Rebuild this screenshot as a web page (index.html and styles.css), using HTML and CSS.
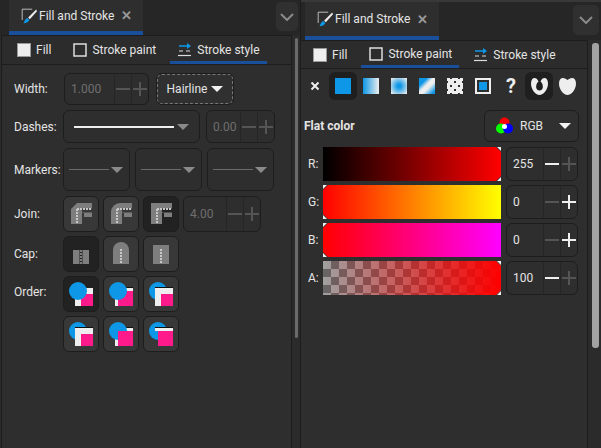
FILE: index.html
```html
<!DOCTYPE html>
<html lang="en">

<head>
    <meta charset="UTF-8">
    <title>Fill and Stroke</title>
    <link rel="stylesheet" href="styles.css">
</head>

<body>
    <svg class="defs" width="0" height="0">
        <symbol id="brush" viewBox="0 0 20 20">
            <path d="M14 1.500H1.500V15" fill="none" stroke="#ddd" stroke-width="1"/>
            <path d="M19 2L9 12l2 2L20 4z" fill="#eee"/>
            <path d="M8 12.500l2.500 2.500c-1 2.500-3.500 4-7.500 4 1.500-1.500 1.500-5 5-6.500z" fill="#0d97e6"/>
        </symbol>
        <symbol id="fill-swatch" viewBox="0 0 14 14">
            <rect x=".5" y=".5" width="13" height="13" fill="#eee" stroke="#999"/>
        </symbol>
        <symbol id="stroke-swatch" viewBox="0 0 14 14">
            <rect x="1" y="1" width="12" height="12" fill="none" stroke="#ddd" stroke-width="1.500"/>
        </symbol>
        <symbol id="style-swatch" viewBox="0 0 14 14">
            <path d="M1 3h9" stroke="#0d97e6" stroke-width="1.500"/>
            <path d="M9 0l4 3-4 3z" fill="#0d97e6"/>
            <path d="M1 8h4M8 8h4" stroke="#ddd" stroke-width="1.200"/>
            <path d="M0 12.500h13" stroke="#ddd" stroke-width="1.200"/>
        </symbol>
    </svg>

    <div class="window">
        <!-- Stroke style panel -->
        <section class="dock dock-left">
            <div class="tabbar">
                <div class="doc-tab">
                    <svg class="ic-brush"><use href="#brush"/></svg>
                    <span>Fill and Stroke</span>
                    <span class="close">✕</span>
                </div>
                <div class="chevron">
                    <svg width="14" height="8" viewBox="0 0 14 8"><path d="M1 1l6 6 6-6" fill="none" stroke="#8a8a8a" stroke-width="2"/></svg>
                </div>
            </div>
            <div class="dock-body">
                <div class="panel">
                    <div class="subtabs">
                        <div class="subtab"><svg class="ic-tab"><use href="#fill-swatch"/></svg>Fill</div>
                        <div class="subtab"><svg class="ic-tab"><use href="#stroke-swatch"/></svg>Stroke paint</div>
                        <div class="subtab active"><svg class="ic-tab"><use href="#style-swatch"/></svg>Stroke style</div>
                    </div>
                    <div class="form">
                        <div class="row row-width">
                            <label>Width:</label>
                            <div class="spin spin-wide dim"><span class="val">1.000</span><span class="btn minus"></span><span class="btn plus"></span></div>
                            <div class="hairline">Hairline<i class="tri tri-light"></i></div>
                        </div>
                        <div class="row row-dashes">
                            <label>Dashes:</label>
                            <div class="combo combo-dash"><i class="dash-line"></i><i class="tri"></i></div>
                            <div class="spin spin-dash dim"><span class="val">0.00</span><span class="btn minus"></span><span class="btn plus"></span></div>
                        </div>
                        <div class="row row-markers">
                            <label>Markers:</label>
                            <div class="combo combo-marker"><i class="marker-line"></i><i class="tri"></i></div>
                            <div class="combo combo-marker"><i class="marker-line"></i><i class="tri"></i></div>
                            <div class="combo combo-marker"><i class="marker-line"></i><i class="tri"></i></div>
                        </div>
                        <div class="row row-tool">
                            <label>Join:</label>
                            <div class="tool">
                                <svg width="36" height="36" viewBox="0 0 36 36">
                                    <path d="M14 7h15v14H21v7H8V13z" class="shape"/>
                                    <path d="M19 17h2v11h-2zM19 12.500h10v4H19z" class="gap"/>
                                    <path d="M14 13h15M14 13v15" class="dots"/>
                                </svg>
                            </div>
                            <div class="tool">
                                <svg width="36" height="36" viewBox="0 0 36 36">
                                    <path d="M17 7h12v14H21v7H8V16a9 9 0 0 1 9-9z" class="shape"/>
                                    <path d="M19 17h2v11h-2zM19 12.500h10v4H19z" class="gap"/>
                                    <path d="M14 13h15M14 13v15" class="dots"/>
                                </svg>
                            </div>
                            <div class="tool on">
                                <svg width="36" height="36" viewBox="0 0 36 36">
                                    <path d="M8 7h21v14H21v7H8z" class="shape"/>
                                    <path d="M19 17h2v11h-2zM19 12.500h10v4H19z" class="gap"/>
                                    <path d="M14 13h15M14 13v15" class="dots"/>
                                </svg>
                            </div>
                            <div class="spin spin-miter dim"><span class="val">4.00</span><span class="btn minus"></span><span class="btn plus"></span></div>
                        </div>
                        <div class="row row-tool">
                            <label>Cap:</label>
                            <div class="tool on">
                                <svg width="36" height="36" viewBox="0 0 36 36">
                                    <path d="M10 14h16v14H10z" class="shape"/>
                                    <path d="M16.500 14h3v14h-3z" class="gap"/>
                                    <path d="M18 14v14" class="dots dots-dim"/>
                                </svg>
                            </div>
                            <div class="tool">
                                <svg width="36" height="36" viewBox="0 0 36 36">
                                    <path d="M10 28V14a8 8 0 0 1 16 0v14z" class="shape"/>
                                    <path d="M18 13v15" class="dots"/>
                                </svg>
                            </div>
                            <div class="tool">
                                <svg width="36" height="36" viewBox="0 0 36 36">
                                    <path d="M10 9h16v19H10z" class="shape"/>
                                    <path d="M18 13v15" class="dots"/>
                                </svg>
                            </div>
                        </div>
                        <div class="row row-tool row-order">
                            <label>Order:</label>
                            <div class="order-grid">
                                <div class="tool on">
                                    <svg width="36" height="36" viewBox="0 0 36 36">
                                        <rect x="12" y="12" width="18" height="18" fill="#eee"/>
                                        <rect x="18" y="18" width="12" height="12" fill="#ff1a8c"/>
                                        <circle cx="15" cy="15" r="9" fill="#0d97e6"/>
                                    </svg>
                                </div>
                                <div class="tool">
                                    <svg width="36" height="36" viewBox="0 0 36 36">
                                        <rect x="12" y="12" width="18" height="18" fill="#eee"/>
                                        <path d="M12 11.500h18" stroke="#111"/>
                                        <rect x="15" y="15" width="15" height="15" fill="#ff1a8c"/>
                                        <circle cx="15" cy="15" r="9" fill="#0d97e6"/>
                                    </svg>
                                </div>
                                <div class="tool">
                                    <svg width="36" height="36" viewBox="0 0 36 36">
                                        <circle cx="15" cy="15" r="9" fill="#0d97e6"/>
                                        <path d="M12 11.500h18" stroke="#111"/>
                                        <rect x="12" y="12" width="18" height="18" fill="#eee"/>
                                        <rect x="18" y="18" width="12" height="12" fill="#ff1a8c"/>
                                    </svg>
                                </div>
                                <div class="tool">
                                    <svg width="36" height="36" viewBox="0 0 36 36">
                                        <circle cx="15" cy="15" r="9" fill="#0d97e6"/>
                                        <path d="M12 11.500h18" stroke="#111"/>
                                        <rect x="12" y="12" width="18" height="18" fill="#eee"/>
                                        <rect x="18" y="18" width="12" height="12" fill="#ff1a8c"/>
                                    </svg>
                                </div>
                                <div class="tool">
                                    <svg width="36" height="36" viewBox="0 0 36 36">
                                        <rect x="12" y="12" width="18" height="18" fill="#eee"/>
                                        <path d="M12 11.500h18" stroke="#111"/>
                                        <circle cx="15" cy="15" r="9" fill="#0d97e6"/>
                                        <rect x="15" y="15" width="15" height="15" fill="#ff1a8c"/>
                                    </svg>
                                </div>
                                <div class="tool">
                                    <svg width="36" height="36" viewBox="0 0 36 36">
                                        <circle cx="15" cy="15" r="9" fill="#0d97e6"/>
                                        <path d="M12 11.500h18" stroke="#111"/>
                                        <rect x="12" y="12" width="18" height="3" fill="#eee"/>
                                        <rect x="15" y="15" width="15" height="15" fill="#ff1a8c"/>
                                    </svg>
                                </div>
                            </div>
                        </div>
                    </div>
                </div>
                <div class="scroll scroll-left"><i></i></div>
            </div>
        </section>

        <!-- Stroke paint panel -->
        <section class="dock dock-right">
            <div class="tabbar">
                <div class="doc-tab">
                    <svg class="ic-brush"><use href="#brush"/></svg>
                    <span>Fill and Stroke</span>
                    <span class="close">✕</span>
                </div>
                <div class="chevron">
                    <svg width="14" height="8" viewBox="0 0 14 8"><path d="M1 1l6 6 6-6" fill="none" stroke="#8a8a8a" stroke-width="2"/></svg>
                </div>
            </div>
            <div class="dock-body">
                <div class="panel">
                    <div class="subtabs">
                        <div class="subtab"><svg class="ic-tab"><use href="#fill-swatch"/></svg>Fill</div>
                        <div class="subtab active"><svg class="ic-tab"><use href="#stroke-swatch"/></svg>Stroke paint</div>
                        <div class="subtab"><svg class="ic-tab"><use href="#style-swatch"/></svg>Stroke style</div>
                    </div>
                    <div class="paint-modes">
                        <div class="mode"><svg width="10" height="10" viewBox="0 0 10 10"><path d="M1.500 1.500l7 7M8.500 1.500l-7 7" stroke="#eee" stroke-width="2"/></svg></div>
                        <div class="mode on"><span class="swatch sw-flat"></span></div>
                        <div class="mode"><span class="swatch sw-linear"></span></div>
                        <div class="mode"><span class="swatch sw-radial"></span></div>
                        <div class="mode"><span class="swatch sw-mesh"></span></div>
                        <div class="mode"><span class="swatch sw-pattern"></span></div>
                        <div class="mode"><span class="swatch sw-swatch"></span></div>
                        <div class="mode mode-unset">?</div>
                        <div class="mode on">
                            <svg width="17" height="17" viewBox="0 0 17 17"><path d="M3.500 0C5 0 6.500 1 7.500 3.500c-2 1.500-2.500 4-2.300 6 .3 2 1.500 3 3.300 3s3-1 3.300-3c.2-2-.3-4.500-2.300-6C10.500 1 12 0 13.500 0 15.500 0 17 2 17 5.500 17 11.500 12.500 17 8.500 17S0 11.500 0 5.500C0 2 1.500 0 3.500 0z" fill="#eee"/></svg>
                        </div>
                        <div class="mode">
                            <svg width="17" height="17" viewBox="0 0 17 17"><path d="M4 0c2 0 3 1 4.500 2C10 1 11 0 13 0c2.500 0 4 2 4 5.500C17 11.500 12.500 17 8.500 17S0 11.500 0 5.500C0 2 1.500 0 4 0z" fill="#eee"/></svg>
                        </div>
                    </div>
                    <div class="flat-row">
                        <strong>Flat color</strong>
                        <div class="rgb-select">
                            <svg width="17" height="17" viewBox="0 0 17 17">
                                <circle cx="8.500" cy="5.500" r="5" fill="#f00"/>
                                <circle cx="5" cy="11.500" r="5" fill="#0f0"/>
                                <circle cx="12" cy="11.500" r="5" fill="#00f"/>
                                <circle cx="8.500" cy="9.500" r="2.500" fill="#fff"/>
                            </svg>
                            <span>RGB</span>
                            <i class="tri tri-light"></i>
                        </div>
                    </div>
                    <div class="sliders">
                        <div class="slide-row">
                            <label>R:</label>
                            <div class="slider">
                                <div class="track track-r"></div>
                                <i class="thumb top-right"></i><i class="thumb bottom-right"></i>
                            </div>
                            <div class="spin spin-color"><span class="val">255</span><span class="btn minus"></span><span class="btn plus faint"></span></div>
                        </div>
                        <div class="slide-row">
                            <label>G:</label>
                            <div class="slider">
                                <div class="track track-g"></div>
                                <i class="thumb top-left"></i><i class="thumb bottom-left"></i>
                            </div>
                            <div class="spin spin-color"><span class="val">0</span><span class="btn minus faint"></span><span class="btn plus"></span></div>
                        </div>
                        <div class="slide-row">
                            <label>B:</label>
                            <div class="slider">
                                <div class="track track-b"></div>
                                <i class="thumb top-left"></i><i class="thumb bottom-left"></i>
                            </div>
                            <div class="spin spin-color"><span class="val">0</span><span class="btn minus faint"></span><span class="btn plus"></span></div>
                        </div>
                        <div class="slide-row">
                            <label>A:</label>
                            <div class="slider">
                                <div class="track track-a"></div>
                                <i class="thumb top-right"></i><i class="thumb bottom-right"></i>
                            </div>
                            <div class="spin spin-color"><span class="val">100</span><span class="btn minus"></span><span class="btn plus faint"></span></div>
                        </div>
                    </div>
                </div>
                <div class="scroll scroll-right"><i></i></div>
            </div>
        </section>
    </div>
</body>

</html>
```

FILE: styles.css
```css
html, body {
    margin: 0;
    padding: 0;
    height: 100%;
    overflow: hidden;
}

body {
    font-family: Roboto, "Noto Sans", sans-serif;
    font-size: 12px;
    color: #e4e4e4;
    background-color: #2b2b2b;
}

.defs {
    display: block;
    height: 0;
}

.window {
    display: flex;
    width: 601px;
    height: 448px;
}

.dock {
    display: flex;
    flex-direction: column;
}

.dock-left {
    width: 300px;
}

.dock-right {
    width: 301px;
    border-left: 1px solid #1d1d1d;
    box-sizing: border-box;
}

/* Tab leiste */
.tabbar {
    display: flex;
    background-color: #262626;
    flex: none;
}

.dock-left .tabbar {
    height: 35px;
    padding-left: 9px;
}

.dock-right .tabbar {
    height: 40px;
    padding-left: 4px;
    border-top: 2px solid #383838;
    box-sizing: border-box;
}

.doc-tab {
    width: 134px;
    box-sizing: border-box;
    display: flex;
    align-items: center;
    padding-left: 12px;
    background-color: #2e2e2e;
    border-bottom: 4px solid #1a4f9c;
    font-size: 12px;
    white-space: nowrap;
}

.ic-brush {
    width: 16px;
    height: 16px;
    margin-right: 2px;
    flex: none;
}

.close {
    margin-left: 7px;
    color: #999;
    font-size: 13px;
    font-weight: bold;
}

.chevron {
    margin-left: auto;
    background-color: #303030;
    border-radius: 5px;
    display: flex;
    align-items: center;
    justify-content: center;
}

.dock-left .chevron {
    width: 22px;
    height: 29px;
    margin-top: 2px;
    margin-right: 2px;
}

.dock-right .chevron {
    width: 26px;
    height: 30px;
    margin-top: 3px;
    margin-right: 2px;
}

.dock-body {
    flex: 1;
    display: flex;
}

.panel {
    flex: 1;
    min-width: 0;
    border-left: 1px solid #1d1d1d;
    border-right: 1px solid #1d1d1d;
    border-top: 1px solid #1d1d1d;
    background-color: #2e2e2e;
}

.dock-left .panel {
    margin-left: 1px;
}

.dock-right .panel {
    border-left: none;
}

.scroll {
    flex: none;
}

.scroll i {
    display: block;
}

.scroll-left {
    width: 8px;
    padding: 3px 2px 0 3px;
    box-sizing: border-box;
}

.scroll-left i {
    height: 300px;
    background-color: #6a6a6a;
    border-radius: 2px;
}

.scroll-right {
    width: 13px;
    padding: 3px 2px 0 4px;
    box-sizing: border-box;
}

.scroll-right i {
    height: 305px;
    background-color: #a2a2a2;
    border-radius: 3px;
}

/* Fill, Stroke paint, Stroke style */
.subtabs {
    display: flex;
    gap: 7px;
    height: 29px;
    box-sizing: border-box;
    padding-left: 7px;
    border-bottom: 1px solid #1d1d1d;
    background-color: #2c2c2c;
}

.dock-right .subtabs {
    padding-left: 4px;
    height: 28px;
}

.subtab {
    display: flex;
    align-items: center;
    gap: 5px;
    height: 27px;
    padding: 0 7px 0 8px;
    box-sizing: border-box;
    white-space: nowrap;
}

.subtab.active {
    border-bottom: 3px solid #1a4f9c;
    padding-top: 2px;
    height: 28px;
}

.dock-right .subtab.active {
    height: 27px;
}

.ic-tab {
    width: 14px;
    height: 14px;
    flex: none;
}

/* Formular */
.form {
    padding: 8px 0 0 12px;
}

.row {
    display: flex;
    align-items: center;
    margin-bottom: 5px;
}

.row label {
    width: 50px;
    flex: none;
}

.row-width {
    height: 32px;
}

.row-dashes {
    height: 33px;
}

.row-dashes label {
    width: 49px;
}

.row-markers {
    height: 43px;
    gap: 5px;
}

.row-markers label {
    width: 44px;
}

.row-tool {
    gap: 4px;
    height: 36px;
    margin-bottom: 4px;
}

.row-tool label {
    width: 45px;
}

.row-order {
    height: 76px;
    align-items: flex-start;
}

.row-order label {
    padding-top: 9px;
}

.order-grid {
    display: grid;
    grid-template-columns: repeat(3, 36px);
    grid-auto-rows: 36px;
    gap: 4px;
}

.spin {
    display: flex;
    align-items: stretch;
    border: 1px solid #1d1d1d;
    border-radius: 6px;
    box-sizing: border-box;
}

.spin .val {
    flex: 1;
    display: flex;
    align-items: center;
    padding-left: 6px;
}

.spin.dim {
    color: #6e6e6e;
}

.spin .btn {
    position: relative;
    width: 17px;
    border-left: 1px solid #262626;
    box-sizing: border-box;
    flex: none;
}

.spin .btn::before {
    content: "";
    position: absolute;
    left: 1px;
    right: 1px;
    top: 50%;
    height: 2px;
    margin-top: -1px;
    background-color: #eee;
}

.spin .plus::after {
    content: "";
    position: absolute;
    top: 50%;
    left: 50%;
    width: 2px;
    height: 14px;
    margin-top: -7px;
    margin-left: -1px;
    background-color: #eee;
}

.spin.dim .btn::before,
.spin.dim .plus::after,
.spin .faint::before,
.spin .faint::after {
    background-color: #555;
}

.spin-wide {
    width: 85px;
    height: 32px;
}

.spin-dash {
    width: 69px;
    height: 33px;
    margin-left: 6px;
}

.spin-miter {
    width: 78px;
    height: 36px;
}

.hairline {
    width: 78px;
    height: 32px;
    margin-left: 7px;
    box-sizing: border-box;
    display: flex;
    align-items: center;
    justify-content: center;
    gap: 4px;
    border-radius: 6px;
    border: 1px solid #1d1d1d;
    background-color: #303030;
    outline: 1px dashed #777;
    outline-offset: -2px;
}

.combo {
    display: flex;
    align-items: center;
    box-sizing: border-box;
    border: 1px solid #1d1d1d;
    border-radius: 6px;
}

.combo-dash {
    width: 137px;
    height: 33px;
    padding-left: 10px;
    gap: 3px;
}

.dash-line {
    width: 100px;
    height: 2px;
    background-color: #eee;
}

.combo-marker {
    width: 67px;
    height: 43px;
    padding-left: 5px;
    gap: 2px;
}

.marker-line {
    width: 40px;
    height: 1px;
    background-color: #6a6a6a;
}

.tri {
    width: 0;
    height: 0;
    border-left: 6px solid transparent;
    border-right: 6px solid transparent;
    border-top: 6px solid #8a8a8a;
    flex: none;
}

.tri-light {
    border-top-color: #f2f2f2;
}

.tool {
    width: 36px;
    height: 36px;
    box-sizing: border-box;
    border: 1px solid #1d1d1d;
    border-radius: 6px;
    background-color: #383838;
    flex: none;
    overflow: hidden;
}

.tool.on {
    background-color: #222;
}

.tool svg {
    display: block;
    margin: -1px;
}

.shape {
    fill: #7e7e7e;
}

.gap {
    fill: #383838;
}

.tool.on .gap {
    fill: #222;
}

.dots {
    fill: none;
    stroke: #c8c8c8;
    stroke-width: 2;
    stroke-dasharray: 2 1;
}

.dots-dim {
    stroke: #7e7e7e;
}

/* Stroke paint */
.paint-modes {
    display: flex;
    margin-top: 3px;
    height: 28px;
}

.mode {
    width: 28px;
    height: 28px;
    display: flex;
    align-items: center;
    justify-content: center;
    border-radius: 6px;
    flex: none;
}

.mode svg {
    display: block;
}

.mode.on {
    background-color: #1f1f1f;
}

.mode-unset {
    font-weight: bold;
    font-size: 20px;
    color: #eee;
}

.swatch {
    display: block;
    width: 16px;
    height: 16px;
    box-sizing: border-box;
}

.sw-flat {
    background-color: #0d97e6;
}

.sw-linear {
    background: linear-gradient(to right, #0d97e6, #eee);
}

.sw-radial {
    background: radial-gradient(circle, #0d97e6 15%, #eee 95%);
}

.sw-mesh {
    background: linear-gradient(135deg, #0d97e6 0 25%, #eee 45% 60%, #0d97e6 90%);
}

.sw-pattern {
    background-image:
        radial-gradient(circle, #eee 3px, transparent 3.5px),
        radial-gradient(circle, #eee 3px, transparent 3.5px);
    background-size: 8px 8px;
    background-position: 0 0, 4px 4px;
}

.sw-swatch {
    border: 2px solid #eee;
    outline: 1px solid #eee;
    outline-offset: -1px;
    background-color: #0d97e6;
    box-shadow: inset 0 0 0 2px #2e2e2e;
}

.flat-row {
    display: flex;
    align-items: center;
    justify-content: space-between;
    margin-top: 9px;
    padding: 0 8px 0 3px;
    height: 33px;
}

.rgb-select {
    width: 95px;
    height: 32px;
    box-sizing: border-box;
    display: flex;
    align-items: center;
    padding-left: 11px;
    border: 1px solid #1d1d1d;
    border-radius: 6px;
    background-color: #303030;
}

.rgb-select span {
    margin-left: 7px;
    margin-right: 16px;
}

.sliders {
    margin-top: 5px;
    padding-left: 7px;
}

.slide-row {
    display: flex;
    align-items: center;
    margin-bottom: 4px;
    height: 34px;
}

.slide-row label {
    width: 15px;
    flex: none;
}

.slider {
    position: relative;
    width: 178px;
    height: 34px;
    flex: none;
}

.track {
    width: 100%;
    height: 100%;
}

.track-r {
    background: linear-gradient(to right, #000, #f00);
    clip-path: polygon(0 0, calc(100% - 5px) 0, 100% 5px, 100% calc(100% - 5px), calc(100% - 5px) 100%, 0 100%);
}

.track-g {
    background: linear-gradient(to right, #f00, #ff0);
    clip-path: polygon(5px 0, 100% 0, 100% 100%, 5px 100%, 0 calc(100% - 5px), 0 5px);
}

.track-b {
    background: linear-gradient(to right, #f00, #f0f);
    clip-path: polygon(5px 0, 100% 0, 100% 100%, 5px 100%, 0 calc(100% - 5px), 0 5px);
}

.track-a {
    background:
        linear-gradient(to right, rgba(255, 0, 0, 0), #f00),
        conic-gradient(#666 25%, #a0a0a0 0 50%, #666 0 75%, #a0a0a0 0) 0 0 / 16px 16px;
    clip-path: polygon(0 0, calc(100% - 5px) 0, 100% 5px, 100% calc(100% - 5px), calc(100% - 5px) 100%, 0 100%);
}

.thumb {
    position: absolute;
    width: 0;
    height: 0;
    border: 2px solid transparent;
}

.top-right {
    top: 0;
    right: 0;
    border-top-color: #eee;
    border-right-color: #eee;
}

.bottom-right {
    bottom: 0;
    right: 0;
    border-bottom-color: #eee;
    border-right-color: #eee;
}

.top-left {
    top: 0;
    left: 0;
    border-top-color: #eee;
    border-left-color: #eee;
}

.bottom-left {
    bottom: 0;
    left: 0;
    border-bottom-color: #eee;
    border-left-color: #eee;
}

.spin-color {
    width: 72px;
    height: 34px;
    margin-left: 5px;
    flex: none;
}
```
